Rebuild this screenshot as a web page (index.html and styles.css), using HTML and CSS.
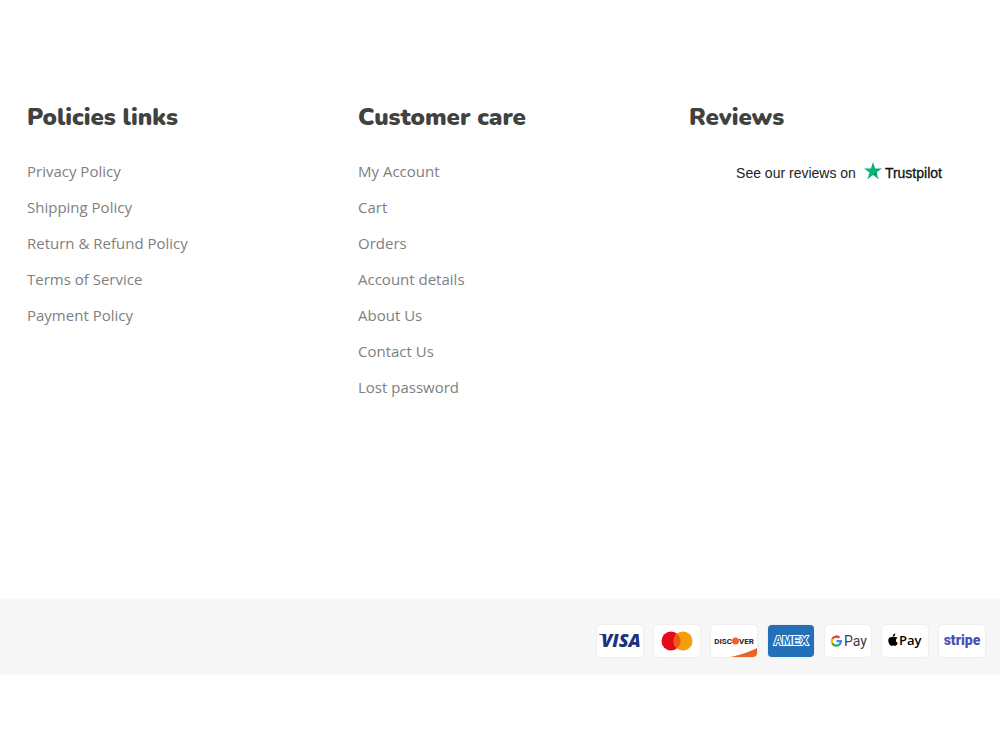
FILE: index.html
```html
<!DOCTYPE html>
<html lang="en">
<head>
    <meta charset="UTF-8">
    <meta name="viewport" content="width=device-width, initial-scale=1.0">
    <title>Footer</title>
    <link rel="stylesheet" href="styles.css">
</head>
<body>
<footer>
    <div class="footer-columns">
        <nav class="footer-column">
            <h2>Policies links</h2>
            <ul>
                <li><a href="#">Privacy Policy</a></li>
                <li><a href="#">Shipping Policy</a></li>
                <li><a href="#">Return &amp; Refund Policy</a></li>
                <li><a href="#">Terms of Service</a></li>
                <li><a href="#">Payment Policy</a></li>
            </ul>
        </nav>
        <nav class="footer-column">
            <h2>Customer care</h2>
            <ul>
                <li><a href="#">My Account</a></li>
                <li><a href="#">Cart</a></li>
                <li><a href="#">Orders</a></li>
                <li><a href="#">Account details</a></li>
                <li><a href="#">About Us</a></li>
                <li><a href="#">Contact Us</a></li>
                <li><a href="#">Lost password</a></li>
            </ul>
        </nav>
        <div class="footer-column">
            <h2>Reviews</h2>
            <a class="trustpilot" href="#">
                <span>See our reviews on</span>
                <span class="trustpilot-logo">
                    <svg width="18" height="18" viewBox="0 0 18 18">
                        <path fill="#00b67a" d="M9 0l2.1 6.5H18l-5.5 4.1 2.1 6.6L9 13.1l-5.6 4.1 2.1-6.6L0 6.5h6.900z"/>
                        <path fill="#00744e" d="M13 12.1l-.5-1.500L9 13.100z"/>
                    </svg>
                    <span>Trustpilot</span>
                </span>
            </a>
        </div>
    </div>

    <div class="footer-bottom">
        <ul class="payments">
            <li class="card">
                <svg viewBox="0 0 46 32">
                    <text class="visa" x="24" y="22" text-anchor="middle">VISA</text>
                    <path fill="#20327b" d="M2 9h6l2 5C8.500 11.500 6 10 2 9.600z"/>
                </svg>
            </li>
            <li class="card">
                <svg viewBox="0 0 46 32">
                    <circle cx="17" cy="16" r="9.500" fill="#e5091a"/>
                    <circle cx="29" cy="16" r="9.500" fill="#f59e0b"/>
                    <path fill="#ef5d12" d="M23 8.600a9.500 9.500 0 0 1 0 14.800a9.500 9.500 0 0 1 0-14.800z"/>
                </svg>
            </li>
            <li class="card">
                <svg viewBox="0 0 46 32">
                    <path fill="#e9642b" d="M19 32C30 30 38 27 46 23V29q0 3-3 3z"/>
                    <text class="discover" x="21" y="19" text-anchor="end">DISC</text>
                    <circle cx="24.500" cy="16" r="3.500" fill="#e9642b"/>
                    <text class="discover" x="28" y="19">VER</text>
                </svg>
            </li>
            <li class="card card-amex">
                <svg viewBox="0 0 46 32">
                    <text class="amex" x="23" y="20" text-anchor="middle">AMEX</text>
                </svg>
            </li>
            <li class="card">
                <svg viewBox="0 0 46 32">
                    <g fill="none" stroke-width="2.300">
                        <path stroke="#ea4335" d="M7.300 13.800A4.700 4.700 0 0 1 14.500 12.700"/>
                        <path stroke="#fbbc04" d="M7.300 13.800a4.700 4.700 0 0 0 0 4.500"/>
                        <path stroke="#34a853" d="M7.300 18.300a4.700 4.700 0 0 0 7 1.400"/>
                        <path stroke="#4285f4" d="M11.500 16.100H16a4.700 4.700 0 0 1-1.700 3.600"/>
                    </g>
                    <text class="gpay" x="19" y="21">Pay</text>
                </svg>
            </li>
            <li class="card">
                <svg viewBox="0 0 46 32">
                    <path fill="#000" d="M14.200 12.500c-1.200-.9-2.400-.7-3.200-.3-.7-.4-4.600-.9-4.700 3.400 0 2.700 1.800 5.300 3.100 5.300.7 0 .9-.4 1.800-.4s1.100.4 1.900.4c1.100 0 2.200-1.700 2.600-2.900-2.200-1-2.300-4.100-.1-5.200-.3-.4-.8-.7-1.400-.9zM13.300 8.600c-1.600.2-2.700 1.500-2.500 3.100 1.500 0 2.600-1.400 2.500-3.100z"/>
                    <text class="applepay" x="17" y="20">Pay</text>
                </svg>
            </li>
            <li class="card">
                <svg viewBox="0 0 46 32">
                    <text class="stripe" x="23" y="20" text-anchor="middle">stripe</text>
                </svg>
            </li>
        </ul>
    </div>
</footer>
</body>
</html>
```
FILE: styles.css
```css
body {
    font-family: "Open Sans", sans-serif;
    background-color: #ffffff;
    color: #808080;
    margin: 0;
}
ul {
    list-style: none;
    margin: 0;
    padding: 0;
}
a {
    color: inherit;
    text-decoration: none;
}
footer {
    padding-top: 100px;
}
.footer-columns {
    display: grid;
    grid-template-columns: repeat(3, 1fr);
    gap: 31px;
    padding: 0 11px 194px 27px;
}
h2 {
    font-family: Nunito, Lato, sans-serif;
    font-size: 24px;
    font-weight: 900;
    line-height: 34px;
    color: #3f423f;
    margin: 0 0 19px;
}
.footer-column li {
    font-size: 15px;
    line-height: 36px;
}
.trustpilot {
    display: flex;
    justify-content: center;
    align-items: center;
    gap: 8px;
    font-family: "Liberation Sans", Arial, sans-serif;
    font-size: 14px;
    line-height: 40px;
    color: #222222;
}
.trustpilot-logo {
    display: flex;
    align-items: center;
    gap: 3px;
    color: #111111;
    -webkit-text-stroke: 0.3px #111111;
}
.trustpilot-logo svg {
    margin-bottom: 4px;
}
.footer-bottom {
    background-color: #f7f7f7;
    padding: 26px 15px 18px;
}
.payments {
    display: flex;
    justify-content: flex-end;
    flex-wrap: wrap;
    gap: 11px;
}
.card {
    width: 46px;
    height: 32px;
    background-color: #ffffff;
    border-radius: 4px;
    box-shadow: 0 0 2px rgba(0, 0, 0, 0.12);
    overflow: hidden;
}
.card svg {
    display: block;
}
.card-amex {
    background-color: #2370b8;
}
.visa {
    font: italic 800 18px "Open Sans", sans-serif;
    fill: #20327b;
}
.discover {
    font: bold 8px Roboto, sans-serif;
    fill: #222222;
}
.amex {
    font: bold 12px "Liberation Sans", Arial, sans-serif;
    fill: #2370b8;
    stroke: #ffffff;
    stroke-width: 2px;
    paint-order: stroke;
}
.gpay {
    font: 14px Roboto, sans-serif;
    fill: #3c4043;
}
.applepay {
    font: 600 13px "Open Sans", sans-serif;
    fill: #000000;
}
.stripe {
    font: 900 14px Roboto, sans-serif;
    fill: #4b50b5;
}
```
